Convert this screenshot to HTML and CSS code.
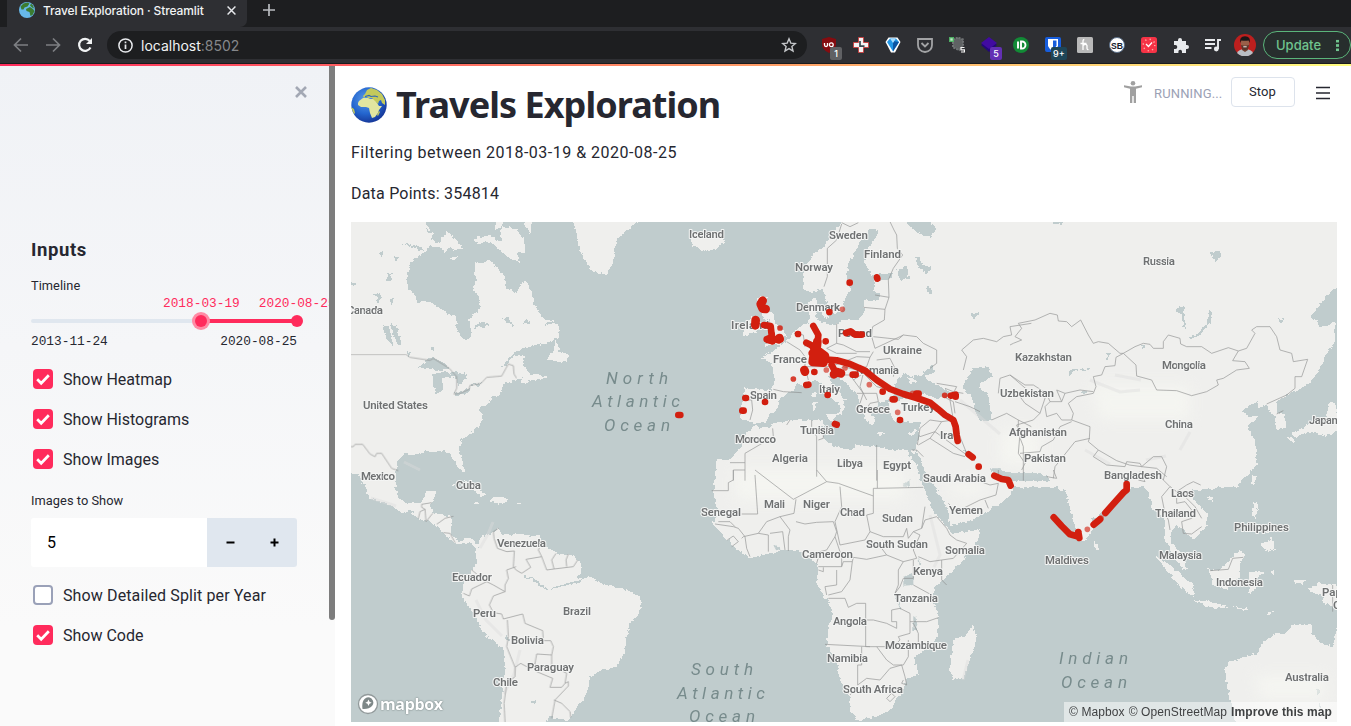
FILE: index.html
```
<!DOCTYPE html>
<html lang="en">
<head>
<meta charset="utf-8">
<title>Travel Exploration · Streamlit</title>
<link rel="stylesheet" href="styles.css">
</head>
<body>
<svg class="defs" width="0" height="0" aria-hidden="true">
  <defs>
    <radialGradient id="sea" cx=".4" cy=".35" r=".65"><stop offset="0" stop-color="#5b9be8"/><stop offset=".6" stop-color="#2466cf"/><stop offset="1" stop-color="#173a9c"/></radialGradient>
    <symbol id="globe" viewBox="0 0 36 36">
      <circle cx="18" cy="18" r="17.7" fill="url(#sea)"/>
      <path d="M7 16l1-2 4-3 5 0 2 1 5 0 2 4 2 3 3 0-3 4-1 3-3 4-3 1-2-5-1-5-3-1-5 0-3-2z" fill="#e2e6a0"/>
      <path d="M12 9l2-2 2-4 4-2 6 2 5 4 3 6 0 5-3-2-1-3-2 1-1 3-3-3-3-3-4 0-2-2-2 2zM0 20l3 2 1 4-1 1zM28 24l1 1-2 4-1-1z" fill="#c3c95c"/>
      <path d="M14 9.500l4-1 2 1 4-.5 3 1" fill="none" stroke="#2f68b4" stroke-width="1.200"/>
    </symbol>
    <symbol id="check" viewBox="0 0 20 20"><path d="M4.200 10.200l4 4 7.600-8" fill="none" stroke="#fff" stroke-width="2.700"/></symbol>
  </defs>
</svg>

<header class="tabstrip">
  <div class="tab">
    <svg class="favicon" viewBox="0 0 16 16"><circle cx="8" cy="8" r="8" fill="#67b8ea"/><path d="M1.500 4.500l3-3 4-1 2 1-2 3-3 1-1 2-2 0zM7 7l4-2 3 2 1.500 2-2 4-2 1-1-4-3-1zM12 1.500l2 2 1 3-2-1-2-2z" fill="#3c7c30"/></svg>
    <span class="tab-title">Travel Exploration · Streamlit</span>
    <svg class="tab-close" viewBox="0 0 8 8"><path d="M.5.500l7 7m0-7l-7 7" stroke="#e8eaed" stroke-width="1.300"/></svg>
  </div>
  <svg class="newtab" viewBox="0 0 12 12"><path d="M6 0v12M0 6h12" stroke="#b9bcc0" stroke-width="1.700"/></svg>
</header>

<nav class="toolbar">
  <svg class="nav-icon" viewBox="0 0 16 16"><path d="M15 8H2M8 1.500L1.500 8 8 14.500" fill="none" stroke="#7d7f83" stroke-width="1.700"/></svg>
  <svg class="nav-icon" viewBox="0 0 16 16"><path d="M1 8h13M8 1.500L14.500 8 8 14.500" fill="none" stroke="#7d7f83" stroke-width="1.700"/></svg>
  <svg class="nav-icon" viewBox="0 0 16 16"><path d="M13.500 10.500a6 6 0 1 1-.8-6.600" fill="none" stroke="#f1f3f4" stroke-width="2.200"/><path d="M15 1v6H9z" fill="#f1f3f4"/></svg>
  <div class="omnibox">
    <svg class="info" viewBox="0 0 15 15"><circle cx="7.500" cy="7.500" r="6.600" fill="none" stroke="#e8eaed" stroke-width="1.500"/><path d="M7.500 6.500V11M7.500 3.600v1.700" stroke="#e8eaed" stroke-width="1.700"/></svg>
    <span class="url">localhost<span class="port">:8502</span></span>
    <svg class="star" viewBox="0 0 16 16"><path d="M8 1.800l1.800 4.300 4.600.4-3.500 3 1.100 4.600L8 11.600l-4 2.500 1.100-4.600-3.500-3 4.600-.4z" fill="none" stroke="#c5c7ca" stroke-width="1.400"/></svg>
  </div>
  <div class="extensions">
    <span class="ext"><svg viewBox="0 0 16 16"><path d="M8 0l7 2v5q0 6-7 9Q1 13 1 7V2z" fill="#850c10"/><path d="M3.500 6v2q0 1.500 1.500 1.500T6.500 8V6" fill="none" stroke="#fff" stroke-width="1.300"/><circle cx="10.300" cy="7.700" r="1.900" fill="none" stroke="#fff" stroke-width="1.300"/></svg><b class="badge gray">1</b></span>
    <span class="ext"><svg viewBox="0 0 16 16"><path d="M5.500.5h5v5h5v5h-5v5h-5v-5h-5v-5h5z" fill="#f3f3f3" stroke="#d23434" stroke-width=".8"/><path d="M7 4v5.200h4.500" fill="none" stroke="#37474f" stroke-width="1.700"/></svg></span>
    <span class="ext"><svg viewBox="0 0 16 16"><path d="M3.500.5h9L15.500 5 10 15.500H6L.5 5z" fill="#fff"/><path d="M5 1.500h6l3 3.500-6 9.500L2 5z" fill="#2196e5"/><path d="M8 4l6 1-6 9.500z" fill="#0c55a3"/><path d="M5 1.500h6L8 6z" fill="#a8ddff"/></svg></span>
    <span class="ext"><svg viewBox="0 0 16 16"><path d="M1 2h14v6q0 6-7 7Q1 14 1 8z" fill="none" stroke="#a2a3a5" stroke-width="1.800"/><path d="M4.500 6L8 9.500 11.500 6" fill="none" stroke="#a2a3a5" stroke-width="1.800"/></svg></span>
    <span class="ext"><svg viewBox="0 0 16 16"><path d="M4 2.500l5-2 5 2v6.500l-4 4-6-2.500z" fill="#5f6264"/><path d="M4 2.500l5-2 5 2v6.500l-4 4-6-2.500z" fill="none" stroke="#707375" stroke-width="2" stroke-dasharray="2 1"/><rect width="5" height="5" fill="#4faf64"/><rect x="1.300" y="1.300" width="2.400" height="2.400" fill="#bde8c5"/><path d="M15.500 10.500H12v2.300h3.500V15H12" fill="none" stroke="#f5f5f5" stroke-width="1.200"/></svg></span>
    <span class="ext"><svg viewBox="0 0 16 16"><path d="M8 2l8 6-8 7-8-7z" fill="#23077a"/><path d="M8 0l8 6-8 6-8-6z" fill="#410ba0"/></svg><b class="badge purple">5</b></span>
    <span class="ext"><svg viewBox="0 0 16 16"><circle cx="8" cy="8" r="8" fill="#128a36"/><path d="M5 4.500v7M8 4.500v7h1a3.500 3.500 0 0 0 0-7z" fill="none" stroke="#fff" stroke-width="1.900"/></svg></span>
    <span class="ext"><svg viewBox="0 0 16 16"><rect width="16" height="15" rx="2" fill="#175ddc"/><path d="M3 2h10v7q-1 3-5 5-4-2-5-5z" fill="#fff"/><path d="M8 3.500h3.500v5Q11 10 8 12z" fill="#175ddc"/></svg><b class="badge teal">9+</b></span>
    <span class="ext"><svg viewBox="0 0 16 16"><rect width="16" height="16" rx="1.500" fill="#b9b9b9"/><path d="M6 13V4q0-1.500 1.300-1.500M6 8.500q3-2.500 4 0V11q0 2 1.500 1.500M3.500 6.500h6" fill="none" stroke="#fff" stroke-width="1.300"/></svg></span>
    <span class="ext"><svg viewBox="0 0 16 16"><circle cx="8" cy="8" r="7.500" fill="#fff" stroke="#5b6f88"/><text x="8" y="11.500" class="sb" textLength="12" lengthAdjust="spacingAndGlyphs">SB</text></svg></span>
    <span class="ext"><svg viewBox="0 0 16 16"><rect width="16" height="16" rx="2.500" fill="#f63346"/><circle cx="8" cy="8" r="5.800" fill="none" stroke="#ffb1a8" stroke-width="1.400" stroke-dasharray="1.200 3.350"/><path d="M5 7l2.500 2.500L11 5.500" fill="none" stroke="#fff" stroke-width="1.300"/></svg></span>
    <span class="ext"><svg viewBox="0 0 16 16"><path d="M1 4h4V3a2 2 0 0 1 4 0v1h4v4h1a2 2 0 0 1 0 4h-1v4H9v-1.500a1.800 1.800 0 0 0-3.600 0V16H1v-4h1.300a1.900 1.900 0 0 0 0-4H1z" fill="#e8eaed"/></svg></span>
    <span class="ext"><svg viewBox="0 0 16 16"><path d="M0 3h10M0 7h10M0 11h6.500M13 12V3h3" fill="none" stroke="#e8eaed" stroke-width="1.900"/><circle cx="11.300" cy="12" r="2.400" fill="#e8eaed"/></svg></span>
    <span class="ext"><svg class="avatar" viewBox="0 0 22 22"><circle cx="11" cy="11" r="11" fill="#bd1f1e"/><path d="M3 19q2-4 8-4t8 4a11 11 0 0 1-16 0z" fill="#b9bdc3"/><path d="M8 12h6v4l-3 2-3-2z" fill="#72402f"/><ellipse cx="11" cy="9.500" rx="4.300" ry="5.500" fill="#995f49"/><path d="M6.300 9Q5 2.500 11 2.300q6 .2 4.700 6.700l-1-2.500q-4 .5-7.400 0z" fill="#1b1718"/><path d="M7 11q4 1.500 8 0-.5 5-4 5t-4-5z" fill="#5a352b"/><path d="M9.300 12.800h3.400" stroke="#eee"/></svg></span>
  </div>
  <div class="update"><span>Update</span><i></i></div>
</nav>
<div class="rainbow"></div>

<div class="app">
  <aside class="sidebar">
    <svg class="side-close" viewBox="0 0 12 12"><path d="M1 1l10 10M11 1L1 11" stroke="#a3a8b4" stroke-width="2.600"/></svg>
    <h2>Inputs</h2>
    <label class="small timeline">Timeline</label>
    <div class="slider">
      <div class="values"><span>2018-03-19</span><span>2020-08-25</span></div>
      <div class="track"><i class="thumb active"></i><i class="thumb"></i></div>
      <div class="range"><span>2013-11-24</span><span>2020-08-25</span></div>
    </div>
    <div class="check"><svg class="box on"><use href="#check"/></svg><span>Show Heatmap</span></div>
    <div class="check"><svg class="box on"><use href="#check"/></svg><span>Show Histograms</span></div>
    <div class="check"><svg class="box on"><use href="#check"/></svg><span>Show Images</span></div>
    <label class="small images">Images to Show</label>
    <div class="number"><span class="num">5</span><span class="steps"><svg viewBox="0 0 9 9"><path d="M.5 4.500h8" stroke="#000" stroke-width="2"/></svg><svg viewBox="0 0 9 9"><path d="M.5 4.500h8M4.500.5v8" stroke="#000" stroke-width="2"/></svg></span></div>
    <div class="check"><i class="box"></i><span class="long">Show Detailed Split per Year</span></div>
    <div class="check"><svg class="box on"><use href="#check"/></svg><span>Show Code</span></div>
    <i class="scrollbar"></i>
  </aside>

  <main>
    <div class="top">
      <h1><svg class="h-globe"><use href="#globe"/></svg><span>Travels Exploration</span></h1>
      <div class="status">
        <svg class="runner" viewBox="0 0 18 22"><circle cx="9" cy="2.300" r="2.300" fill="#a0a0a0"/><path d="M0 4.200l7 1.300h4l7-1.300v2L12 7.700V22h-2.300v-7H8.300v7H6V7.700L0 6.200z" fill="#a0a0a0"/></svg>
        <span class="running">RUNNING...</span>
        <button>Stop</button>
        <svg class="menu" viewBox="0 0 14 14"><path d="M0 1.500h14M0 7h14M0 12.500h14" stroke="#262730" stroke-width="1.700"/></svg>
      </div>
    </div>
    <p class="filter">Filtering between 2018-03-19 &amp; 2020-08-25</p>
    <p class="points">Data Points: 354814</p>
    <div class="map">
      <svg class="world" viewBox="351 222 986 500">
        <defs>
          <filter id="coast" x="0" y="0" width="100%" height="100%"><feTurbulence type="fractalNoise" baseFrequency=".22" numOctaves="2" seed="4"/><feDisplacementMap in="SourceGraphic" scale="5" xChannelSelector="R" yChannelSelector="G"/></filter>
          <filter id="soft" x="-20%" y="-20%" width="140%" height="140%"><feGaussianBlur stdDeviation="7"/></filter>
          <clipPath id="frame"><rect x="351" y="222" width="986" height="500"/></clipPath>
        </defs>
        <g clip-path="url(#frame)">
        <g filter="url(#coast)">
          <rect x="340" y="210" width="1010" height="524" fill="#c0cccd"/>
          <!-- North America, Greenland -->
          <g class="land" transform="translate(350 220) scale(.33333)">
            <path d="M-20-20H215L230 15 252 40 240 58 270 70 283 45 290 30 305 45 325 65 338 85 315 90 300 80 280 97 275 80 255 85 240 78 218 102 190 117 175 150 170 205 195 220 200 248 240 245 270 265 300 287 318 288 320 328 347 362 362 355 362 320 357 297 385 272 388 230 370 208 378 180 372 122 390 130 425 122 450 155 465 170 470 205 500 218 525 180 545 215 550 245 565 270 580 295 610 300 628 320 628 350 600 365 585 372 530 380 500 395 470 420 457 440 475 430 490 410 528 405 520 425 530 450 545 465 560 465 592 470 575 480 540 480 520 493 512 488 518 475 500 478 470 490 455 500 455 520 440 530 425 533 410 560 390 562 398 585 395 605 380 625 355 645 335 660 327 690 340 730 343 755 332 755 310 720 300 700 270 690 230 695 190 705 165 702 145 720 140 745 137 800 60 800 30 770 0 755-20 740z"/>
            <path d="M370 55L420 45 440 65 462 58 450 40 455 20 480 20 502 32 523 60 523 100 500 95 510 130 480 115 450 90 420 65 385 72zM300 118L325 107 310 125zM520-10L550-10 540 42 525 20zM440-10L465-10 455 20 435 30zM665-10L685 60 693 100 725 150 768 165 790 125 800 60 830 30 880-10zM620 362L628 395 655 402 650 425 625 425 592 418 605 400z"/>
            <path class="water" d="M250 465L290 452 310 465 300 475 275 475 275 515 262 525 250 500zM205 443L240 410 280 425 300 445 265 450 235 445zM300 455L345 460 350 475 325 500 318 475zM312 520L357 508 355 515 318 530zM358 498L395 487 390 497zM97 320L115 318 125 345 130 380 110 355zM120 313L140 315 155 375 143 377zM85 98L100 90 105 105 95 115zM108 185L112 163 125 160 122 182zM370 318L400 305 420 318 375 323zM458 295L475 290 490 325zM518 312L535 295 540 312zM580 318L605 302 615 308zM68 215L95 225 85 250 78 235zM118 240L132 232 125 255zM155 70L220 80 218 92zM130 108L145 112 138 122zM3 190L25 195 3 200zM240 383L250 380 247 395zM170 393L185 398 175 408zM225 25L250 32 245 42z"/>
          </g>
          <!-- Central and South America -->
          <g class="land" transform="translate(350 470) scale(.33333)">
            <path d="M15-10L50 60 55 85 110 100 155 128 180 122 205 145 240 155 265 175 285 190 300 205 320 222 345 222 360 215 378 232 382 222 370 208 350 206 330 215 315 210 300 185 305 140 260 130 248 128 240 105 245 98 262 62 230 62 220 85 213 98 170 100 145 80 135 50 130 30 140-10z"/>
            <path d="M378 238L382 222 395 200 430 188 445 175 455 190 480 195 510 192 545 198 570 195 575 220 600 235 620 250 665 255 690 275 697 300 680 325 720 322 765 345 810 352 870 380 875 410 860 440 835 465 828 510 825 550 800 590 760 600 720 620 712 670 690 700 665 735 655 755 610 745 600 735 590 755 590 780 443 780 450 730 465 600 462 540 400 490 370 430 335 380 340 340 360 310 380 280z"/>
            <path d="M340 30L365 40 410 75 388 78 365 58zM415 95L440 80 460 82 482 92 445 101zM372 98H388V101H372zM500 99H515V101H500zM300 45L315 42 312 50z"/>
            <path class="water" d="M463 500L470 498 478 512 468 512zM543 690L558 690 556 702 545 700zM510 320L550 323 575 345 595 357 650 340 690 330 700 322 685 340 640 348 590 360 570 350 545 328z"/>
          </g>
          <!-- Europe and North Africa -->
          <g class="land" transform="translate(690 220) scale(.33333)">
            <path d="M470-20L430 40 400 80 370 100 345 140 338 200 360 222 400 205 410 245 430 285 455 270 465 240 483 210 470 180 475 130 500 85 520 50 545 25 565 35 558 55 530 90 525 130 545 165 610 160 600 178 553 182 550 215 572 222 562 245 522 240 520 290 500 300 460 300 440 312 400 310 385 300 375 285 385 265 375 230 358 248 355 310 320 325 300 355 280 370 250 390 215 415 245 430 250 450 255 480 245 510 165 505 160 540 150 595 175 600 190 612 225 605 265 560 265 545 285 525 310 510 320 490 345 495 375 480 395 490 410 520 440 545 455 570 440 585 455 582 465 560 458 540 478 545 450 522 425 490 415 470 440 460 465 490 500 520 510 550 520 585 545 620 557 602 540 575 560 560 570 545 595 540 598 570 605 590 615 602 650 605 690 605 687 640 680 675 672 693 640 690 600 690 560 680 500 675 480 690 440 680 410 665 395 640 400 600 350 600 300 600 250 610 235 625 190 618 165 650 155 680 110 730 80 800H1060V-20z"/>
            <path d="M200 235L235 228 222 255 250 280 255 310 288 345 275 370 225 378 240 345 240 300 215 290zM155 350L160 330 185 290 210 305 200 335zM2 45L20 35 35 55 80 38 105 65 80 85 50 95 10 80zM405 583L440 583 432 605zM365 520L378 515 378 535 368 530zM365 545L380 545 378 570 368 568zM560 640L590 638 575 645zM655 640L680 630 668 648zM395 270L420 275 410 295 398 290zM370 165L385 170z"/>
            <path class="water" d="M610 530L615 490 640 460 670 470 690 465 730 435 735 455 700 470 730 490 770 510 790 525 740 535 700 520 660 530 625 545 598 545 592 540zM820 490L850 445 895 440 905 470 870 490 872 510 895 520 900 560 905 600 870 605 855 570 845 530 820 508zM620 150L650 138 657 175 632 183zM675 110L690 112 700 135 725 145 710 158 685 145zM645-10L715-10 725 15 740 25 720 50 690 42 660 22zM708 205L720 200 728 220 715 222zM845 280L868 280 850 296zM650 690L662 690 672 705 680 690 685 710 710 745 735 800 705 800 680 750zM818 690L832 695 850 710 880 740 905 755 935 752 965 768 1060 770V800H905L895 775 875 765 860 740 835 712z"/>
            <path d="M650 475L665 470 680 485 665 492z"/>
          </g>
          <!-- Africa and Arabia -->
          <g transform="translate(690 470) scale(.33333)">
            <path class="water" d="M600-5H690L1000-5 1000 300H690zM0-5H95L75 100H0z"/>
            <path class="land-shape" d="M80-30L70 65 85 125 68 160 95 190 130 230 180 265 240 250 290 240 330 245 380 280 385 300 378 340 410 385 430 430 415 480 410 530 440 570 450 630 480 680 480 715 500 750 560 740 600 720 640 660 650 630 685 610 675 560 700 540 745 500 745 440 730 390 735 350 770 320 820 270 865 210 870 178 790 192 770 170 735 130 720 100 700 50 675-30zM690-30L720 30 750 75 775 125 780 165 840 153 900 120 960 80 975 45 925 20 895-10 880-30zM930-30L940 2 980 8 1060 12V-30zM848 465L860 500 840 570 820 625 790 627 780 600 790 510 825 500z"/>
            <path class="water" d="M640 320L670 312 670 345 640 347zM250 225L270 235 272 245 258 240zM615 375L620 375 635 420 628 415zM670 435L677 440 680 480 670 480zM685 260L695 285 688 285zM635 50L658 30 660 50z"/>
          </g>
          <!-- Asia -->
          <g class="land" transform="translate(1010 220) scale(.33333)">
            <path d="M0-20H1010V190L960 215 900 292 920 300 930 320 960 312 975 305 975 370 950 400 930 450 900 490 860 510 830 525 800 545 802 578 825 580 828 625 800 630 795 590 780 575 770 552 742 565 745 540 695 572 715 590 745 588 712 618 735 660 740 705 730 745 680 800H0V755L85 758 120 778 300 800H0z"/>
            <path d="M845 640L900 612 945 610 960 545 975 550 985 590 985 630 945 650 900 635 870 645 860 655zM835 655L853 650 850 672z"/>
            <path class="water" d="M530 355L560 345 590 310 597 272 605 275 600 310 570 345 545 358zM598 92L630 95 632 105 620 128 605 110zM495 268L520 258 527 325 522 325 515 290zM172 465L180 448 240 445 240 450 190 452 178 470zM205 515L232 513 220 520zM805 298L825 298 812 312zM123 5H160V14L130 12zM288 400L302 400 292 420zM395 375L405 375 402 385zM0 750H80L125 782H0z"/>
          </g>
          <!-- South-East Asia and Australia -->
          <g class="land" transform="translate(1010 470) scale(.33333)">
            <path d="M0-20V10L100 8 120 30 150 62 165 60 185 130 200 180 218 220 245 185 245 150 300 110 350 60 385 30 400 50 415 70 430 120 465 140 465 200 480 240 510 290 532 302 520 260 485 220 480 190 500 165 535 195 550 212 592 170 590 130 550 90 545 58 570 62 640 50 690 35 745-20zM250 208L268 235 257 245zM432 252L480 285 550 345 552 382 510 350 460 290zM550 390L600 395 665 412 600 414zM595 295L625 300 660 270 690 238 707 255 690 280 690 325 650 358 610 345zM718 305L770 305 745 320 735 330 750 355 735 355 720 380 715 345zM730 98L745 100 738 145 724 130zM755 225L785 205 795 235 775 245zM730 15L742 15 732 45 725 35zM590 85L610 78 605 95zM850 330L885 330 880 342 855 338zM895 355L930 338 1010 350V440L970 410 945 400 935 375 905 370zM765 435L790 422 780 436zM750 170L765 170 775 190 755 185zM670 408L720 418 700 422zM780 305L795 300 795 315zM645 600L660 575 740 550 755 520 800 488 830 490 850 460 905 465 905 490 945 525 970 528 980 468 1010 470V780H680L670 730 660 680 650 640z"/>
            <path class="water" d="M918 655L930 660 928 675 918 675zM925 690L932 710 930 725z"/>
          </g>
        </g>
        <!-- desert and plateau highlights -->
        <g filter="url(#soft)" fill="#f7f8f3" opacity=".7"><path d="M735 468H905V500H735zM1090 385H1190V420H1100zM1255 675H1325V700H1260zM1000 430H1040V465H1000zM950 482H985V495H950z"/></g>
        <!-- relief -->
        <g class="relief"><path d="M371 498l25 8M480 548l8-14 5-12M476 600l10 20 16 16M520 650l-6 24-10 20M930 515l10 40-6 12M1090 380l30 12 20-2M1180 450l10-18M1085 450l25 14M1146 460l20-4M960 400l40 34M420 470l-16-8M1115 375l26 5M968 660l-5 20"/></g>

        <g class="borders">
          <path transform="translate(350 220) scale(.33333)" d="M0 403H168L180 412 240 421 250 415 298 445 320 470 320 505 312 522 330 520 357 508 360 496 393 490 410 472 455 468 475 432 490 437 492 462 500 475M0 680H10L15 673H38L60 702 75 710 80 700H95L125 745 145 752"/>
          <path transform="translate(350 470) scale(.33333)" d="M205 145L210 125 225 118 215 112 215 103 245 98M225 118L228 155M228 155L248 130M260 163L285 145 310 139M280 188L300 190 315 218M445 175L430 185 432 205 442 235 470 245 493 243 490 290 498 300 515 310 542 292 528 268 575 260 565 240 575 220M575 260L590 300 612 297 670 290 683 270M612 297L605 270 618 250M650 290L648 270 655 252M498 290L470 300 475 325 465 345 465 365 430 345 410 335 365 357 358 378 340 370M365 300L380 312M465 365L430 378 418 405 430 428 455 432 460 447 518 432 525 460 578 482 580 512 602 512 610 530 605 555 560 552 555 580 530 590 512 580 495 592 482 560 470 530 475 500 472 450M605 555L605 585 640 605 650 610 645 640 635 652 600 652 608 625 560 605 555 580M645 640L655 635 655 648 615 690 605 745M612 690L635 700 660 725 662 742M495 592L495 620 470 640 462 700 465 756"/>
          <path transform="translate(690 220) scale(.33333)" d="M455 12L440 60 412 85 412 170 402 200M455 8L480 20 505 8M600 5L612 30 620 45 622 85 638 105 610 145 595 180M555 225L597 232 595 180M520 262L585 268 597 232M585 268L583 300 548 320 545 350 555 385 630 350 630 350M550 350L625 358 640 345 680 350 700 370 740 390 740 430 720 445M630 350L640 345M440 310L440 370 460 375 500 395 540 395M440 370L410 385 440 400 500 400M290 365L330 390 345 410M312 340L340 345 345 380M345 410L345 440 355 480M345 440L420 440 450 430 500 410 540 412 550 395M540 412L530 440 500 450 460 440M460 440L440 455M450 465L480 465 520 520 510 550M490 480L520 460 560 500 600 510M500 520L560 520 565 545 540 550 525 575M560 420L600 415 615 445 610 470M520 460L510 500 530 540M250 508L280 515 335 518M185 540L188 570 180 600M165 540L185 540M300 600L290 615M365 600L365 620 380 650 380 770M400 625L400 655 385 660M248 625L250 650 225 665 165 700 165 782M120 728H165M130 782V750H165M560 675V782M665 690L680 690 700 710M682 675L690 625 720 600 755 605 790 600M690 650L735 635 755 605M735 635L720 655 685 675M735 635L830 705 830 705M790 600L810 650 830 700M720 655L790 700 825 710M790 600L780 540 800 500 740 490M765 505L790 515 820 520M795 545L840 560 870 575M760 530L790 545 795 580M820 450L830 410 815 390 850 360 880 355 920 365 940 350 965 345 960 320 1024 310M905 600L950 580 985 600 1024 620M925 520L930 475 960 465 1024 520M985 600L985 640 1000 680 1000 782"/>
          <path transform="translate(690 470) scale(.33333)" d="M195 15L203 132H155M65 62H115V38L130 30V0M195 0L310 88 410 35 380 0M410 35L445 40 550 78V55H562V0M562 55L700 52M550 78V130L530 135 540 185 525 210 450 225 435 155 455 110 450 50M318 88L312 130 270 140 230 155 205 190 160 200 155 205M135 170L120 155 85 155M75 162L130 170 145 175 165 200 170 235 180 260M112 210L130 198 145 215 125 230M205 190L235 195 235 245M240 190L278 185 285 240M295 243V200L300 180 270 140M318 155L345 162 380 157 430 155 440 185 435 200 410 240 390 245 380 280M435 200L455 260 455 290H385M455 290L460 275 487 275 490 262 455 260M487 275L480 330 455 365 415 375M440 300L440 345 405 350 410 375M385 300L400 305V292M490 262L530 268 590 255 640 275 680 265 670 240 690 195 670 185 655 205 650 175 640 200 580 200 540 185M590 255L575 235 530 215M670 185L695 175 705 110M740 140L705 150 695 175M740 140L770 175 780 195 800 210 830 220 790 265 755 270 720 275 685 260M755 270V330L770 345M670 345L725 375M640 275L625 300 625 345 615 370 630 350 640 325H670V270M415 385H465L475 412 500 400H527L527 530 540 530M527 450H550L590 460 620 475V455L605 455 605 420 630 415 660 430 660 490 625 500 630 510 610 530 560 530M660 455L710 455 745 443M405 523L540 530 560 530 590 570 610 585 640 585 655 560 655 510M515 530V585H503V645L530 625 570 630 600 595 635 585 645 620 650 645 635 640 640 630M590 685L605 670 615 680 600 695zM670 460L685 490 685 520M480 675L503 650M775 100L800 125 870 90 918 75 925 40 900 45 845 25M885 90L895 115M925 20V0"/>
          <path transform="translate(1010 220) scale(.33333)" d="M0 375L10 370 35 360 15 350 35 325 25 310 75 300 120 280 142 285 145 303 170 305 185 320 212 300 235 345 250 370 265 365 295 370 330 400 340 400 375 380 400 370 420 373 430 385 460 385 460 365 475 345 510 355 512 372 530 380 575 380 605 400 655 383 685 393 710 385 735 340 725 330 740 320 780 320 800 350 810 390 845 400 850 425 893 418 875 470 855 470 855 505 830 525 770 552M685 393L668 422 705 425 718 445 680 450 640 475 620 480 625 495 590 515 545 527 500 512 440 510 425 480 380 468 378 435 340 400 318 412 315 437 285 440 275 465 250 470 258 500 250 520 200 530 175 550 190 580 185 600 240 620 238 655 235 665 265 690 320 722 358 735 395 740 430 710 455 710 470 740 460 780M0 465L45 495 70 495 110 520 120 545 155 545 165 520 210 510 250 515M110 520L90 580 45 550 30 530 0 520M120 545L105 560 110 590 140 580 155 600 185 600M165 520L140 510 155 545M90 580L70 600 20 615 30 640 25 700 45 730 35 750M30 700L90 695 95 680 130 660 150 620 185 605M130 775L135 740 195 665 240 655M265 690L250 710 290 735 345 740 350 725 390 730 395 740M395 740L440 745 470 770M800 582L820 572"/>
          <path transform="translate(1010 470) scale(.33333)" d="M390 5L405 35 385 30M450 20L480 50 455 80 465 130 475 150 480 180M480 50L500 65 530 45 550 35 572 45M500 65L500 100 525 95 545 120 545 145 515 155 520 190 545 192 575 170M530 85L555 110 575 145M600 302L655 298 668 265 700 262M968 345V425M130 0L140 25 110 20"/>
        </g>

        <g class="labels">
          <text x="347" y="314" textLength="36">Canada</text><text x="363" y="409" textLength="65">United States</text><text x="361" y="480" textLength="34">Mexico</text><text x="456" y="489" textLength="25">Cuba</text><text x="497" y="547" textLength="49">Venezuela</text><text x="452" y="581" textLength="40">Ecuador</text><text x="473" y="617" textLength="23">Peru</text><text x="563" y="615" textLength="28">Brazil</text><text x="511" y="644" textLength="33">Bolivia</text><text x="527" y="671" textLength="47">Paraguay</text><text x="493" y="686" textLength="25">Chile</text>
          <text x="689" y="238" textLength="35">Iceland</text><text x="829" y="239" textLength="39">Sweden</text><text x="864" y="258" textLength="37">Finland</text><text x="795" y="271" textLength="38">Norway</text><text x="796" y="311" textLength="44">Denmark</text><text x="731" y="329" textLength="38">Ireland</text><text x="838" y="337" textLength="34">Poland</text><text x="883" y="354" textLength="39">Ukraine</text><text x="773" y="363" textLength="34">France</text><text x="856" y="374" textLength="43">Romania</text><text x="819" y="393" textLength="21">Italy</text><text x="750" y="399" textLength="27">Spain</text><text x="856" y="413" textLength="34">Greece</text><text x="901" y="411" textLength="34">Turkey</text><text x="800" y="434" textLength="34">Tunisia</text><text x="940" y="439" textLength="20">Iraq</text><text x="735" y="443" textLength="41">Morocco</text><text x="772" y="462" textLength="36">Algeria</text><text x="837" y="467" textLength="26">Libya</text><text x="883" y="469" textLength="28">Egypt</text><text x="923" y="482" textLength="63">Saudi Arabia</text>
          <text x="701" y="516" textLength="40">Senegal</text><text x="764" y="508" textLength="21">Mali</text><text x="803" y="508" textLength="27">Niger</text><text x="840" y="516" textLength="25">Chad</text><text x="882" y="522" textLength="31">Sudan</text><text x="949" y="514" textLength="34">Yemen</text><text x="866" y="548" textLength="62">South Sudan</text><text x="945" y="554" textLength="40">Somalia</text><text x="802" y="558" textLength="51">Cameroon</text><text x="913" y="575" textLength="30">Kenya</text><text x="894" y="602" textLength="44">Tanzania</text><text x="833" y="625" textLength="34">Angola</text><text x="885" y="649" textLength="62">Mozambique</text><text x="827" y="662" textLength="41">Namibia</text><text x="843" y="693" textLength="60">South Africa</text>
          <text x="1143" y="265" textLength="32">Russia</text><text x="1015" y="361" textLength="57">Kazakhstan</text><text x="1162" y="369" textLength="44">Mongolia</text><text x="1000" y="397" textLength="54">Uzbekistan</text><text x="1165" y="428" textLength="28">China</text><text x="1309" y="424" textLength="29">Japan</text><text x="1009" y="436" textLength="58">Afghanistan</text><text x="1024" y="462" textLength="42">Pakistan</text><text x="1104" y="479" textLength="58">Bangladesh</text><text x="1171" y="497" textLength="23">Laos</text><text x="1155" y="517" textLength="41">Thailand</text><text x="1234" y="531" textLength="55">Philippines</text><text x="1159" y="559" textLength="43">Malaysia</text><text x="1045" y="564" textLength="44">Maldives</text><text x="1216" y="586" textLength="47">Indonesia</text><text x="1322" y="596" textLength="58">Papua New</text><text x="1333" y="609" textLength="34">Guinea</text><text x="1285" y="681" textLength="44">Australia</text>
        </g>
        <g class="oceans">
          <text x="606" y="384" textLength="62">North</text><text x="592" y="407" textLength="88">Atlantic</text><text x="604" y="431" textLength="66">Ocean</text>
          <text x="691" y="675" textLength="62">South</text><text x="677" y="699" textLength="88">Atlantic</text><text x="689" y="722" textLength="66">Ocean</text>
          <text x="1059" y="664" textLength="69">Indian</text><text x="1061" y="688" textLength="66">Ocean</text>
        </g>

        <!-- recorded locations: routes and isolated points -->
        <g class="heat" transform="translate(690 220) scale(.33333)">
          <path d="M400 418L440 421 480 432 525 452 560 480 600 507 640 522 680 534 720 548 745 568 765 585 790 600 797 620 800 645 803 663"/>
          <path class="wide" d="M218 242L212 252 218 266 227 267M197 300L196 316M246 360L236 358M268 354L266 358"/><path d="M222 315L242 318 246 355M230 358L272 358M245 340L247 364M370 318L385 345 382 380M349 368L382 385M468 339L482 334 495 344 515 344M425 435L438 460"/>
          <path class="wide" d="M372 383L405 408 370 412 368 426 400 428 390 400 405 420M382 365L380 385M368 400L400 420M432 463L440 456 453 460M343 450L345 455"/>
          <path d="M349 495L355 494M488 464H497M782 527L797 524 797 530M836 703L848 712M608 538H614M435 612L440 614M561 172L562 176M679 521L686 521M166 534H168M157 572H161"/>
          <g class="dots"><path d="M324 342h.1M407 364h.1M373 456h.1M225 546h.1M413 525h.1M479 188h.1M418 276h.1M578 515h.1M630 600h.1M866 740h.1"/></g>
          <g class="faint strong"><path d="M270 324h.1M310 477h.1M764 526h.1"/></g>
          <g class="faint"><path d="M457 268h.1M409 450h.1M538 494h.1M623 577h.1M668 520h.1M465 444h.1"/></g>
          <path d="M913 767L935 777 955 780 962 797"/>
        </g>
        <g class="heat" transform="translate(350 220) scale(.33333)"><path d="M985 585H991"/></g>
        <g class="heat" transform="translate(1010 470) scale(.33333)">
          <path d="M131 142L155 168 180 193 207 200 205 186 208 204M251 164L270 148M286 129L340 68 350 60 350 42"/><g class="faint"><path d="M232 178h.1M273 144h.1"/></g>
        </g>
        </g>
      </svg>
      <div class="mapbox"><svg viewBox="0 0 22 22"><circle cx="11" cy="11" r="9.500" fill="#fff" stroke="#929a9b" stroke-width="1.300"/><path d="M5.500 16q-1-7 2-10t7-.5q3.500 4 .5 7.500t-9.500 3z" fill="#7e8888"/><path d="M11.500 6.500l1 2.200 2.200 1-2.200 1-1 2.200-1-2.200-2.200-1 2.200-1z" fill="#fff"/></svg><span>mapbox</span></div>
      <div class="credits"><span>© Mapbox</span><span>© OpenStreetMap</span><b>Improve this map</b></div>
    </div>
  </main>
</div>
</body>
</html>
```
FILE: styles.css
```
* { box-sizing: border-box; }
body { margin: 0; width: 1351px; height: 726px; overflow: hidden; background: #fff; color: #262730; font-family: Roboto, "Noto Sans", sans-serif; display: flex; flex-direction: column; }
svg { display: block; flex: none; }
.defs { position: absolute; }
.tabstrip { height: 27px; background: #1d1e20; display: flex; padding-left: 7px; }
.tab { width: 240px; height: 27px; background: #2e2f33; border-radius: 0 0 7px 0; display: flex; align-items: center; padding: 0 11px 7px 12px; color: #f1f3f4; }
.favicon { width: 16px; height: 16px; }
.tab-title { margin-left: 8px; font: 500 12px Inter, sans-serif; letter-spacing: -.11px; white-space: nowrap; width: 184px; }
.tab-close { width: 9px; height: 9px; }
.newtab { width: 12px; height: 12px; margin: 4px 0 0 16px; }
.toolbar { height: 37px; background: #2e2f33; display: flex; align-items: center; padding-left: 13px; border-bottom: 1px solid #1b1c1e; }
.nav-icon { width: 16px; height: 16px; margin-right: 16px; }
.omnibox { width: 700px; height: 28px; margin-left: -2px; border-radius: 14px; background: #1d1e20; display: flex; align-items: center; padding: 0 10px 0 11px; }
.info { width: 15px; height: 15px; }
.url { flex: 1; margin-left: 8px; color: #f1f3f4; font: 400 14px Inter, sans-serif; }
.port { color: #85878a; }
.star { width: 16px; height: 16px; }
.extensions { display: flex; margin-left: 6px; }
.ext { width: 32px; height: 24px; display: grid; place-items: center; position: relative; }
.ext svg { width: 16px; height: 16px; }
.ext .avatar { width: 22px; height: 22px; }
.sb { font: 700 9.5px "Liberation Sans", sans-serif; text-anchor: middle; fill: #16202c; }
.badge { position: absolute; left: 17px; top: 14px; height: 13px; min-width: 12px; padding: 0 2px; border-radius: 2px; color: #fff; font: 500 9px/13px Inter, sans-serif; text-align: center; }
.gray { background: #606164; }
.purple { background: #6330b4; }
.teal { background: #1e4558; left: 14px; }
.update { width: 88px; height: 28px; margin-left: 2px; border: 1.5px solid #5bb57b; border-radius: 14px; background: #272e2d; color: #70c48e; font: 500 13px Inter, sans-serif; display: flex; align-items: center; justify-content: space-between; padding: 0 11px 0 12px; }
.update i { width: 3px; height: 13px; background: radial-gradient(circle, #70c48e 1.5px, transparent 1.7px) 0 0 / 3px 4.33px; }
.rainbow { height: 2px; background: linear-gradient(90deg, #ff2b5c, #ffa067 58%, #fffd80); }
.app { display: flex; flex: 1; min-height: 0; }
.sidebar { width: 335px; height: 660px; position: relative; overflow: hidden; background: linear-gradient(#f0f2f6, #fafafa 85%); padding: 20px 38px 0 31px; display: flex; flex-direction: column; }
.side-close { width: 12px; height: 12px; margin-left: 264px; }
.sidebar h2 { margin: 142px 0 0; font-size: 18.5px; line-height: 20px; font-weight: 700; letter-spacing: .6px; }
.small { font-size: 12.8px; line-height: 18px; letter-spacing: .05px; }
.timeline { margin-top: 17px; }
.slider { font: 12.8px/16px "Liberation Mono", monospace; height: 64px; padding-top: 1px; }
.values { color: #ff2b5c; margin-left: 132px; display: flex; gap: 19px; white-space: nowrap; width: 166px; overflow: hidden; }
.track { width: 266px; height: 4px; margin-top: 7px; border-radius: 2px; background: linear-gradient(90deg, #e0e7ef 170px, #ff2b5c 170px); position: relative; }
.thumb { position: absolute; width: 12px; height: 12px; top: -4px; left: 260px; border-radius: 50%; background: #ff2b5c; }
.thumb.active { left: 164px; box-shadow: 0 0 0 3px #ff8ba5; }
.range { display: flex; justify-content: space-between; margin-top: 11px; }
.check { height: 40px; padding-left: 2px; display: flex; align-items: center; font-size: 16px; gap: 10px; white-space: nowrap; }
.long { letter-spacing: .12px; }
.box { width: 20px; height: 20px; border-radius: 4px; border: 2px solid #9aa1b8; background: #fff; }
.box.on { border: 0; background: #ff2b5c; }
.images { margin-top: 13px; }
.number { width: 266px; height: 49px; margin: 8px 0 8px; display: flex; border-radius: 3px; overflow: hidden; color: #000; }
.num { width: 176px; background: #fff; padding: 15px 16px; font-size: 16px; line-height: 19px; }
.steps { width: 90px; background: #e0e7ef; display: flex; align-items: center; justify-content: space-around; padding-left: 1px; }
.steps svg { width: 9px; height: 9px; }
.scrollbar { position: absolute; right: 0; top: -6px; width: 6px; height: 560px; background: #7d7d7d; border-radius: 3px; }
main { flex: 1; padding: 0 14px 0 16px; }
.top { height: 76px; display: flex; justify-content: space-between; }
h1 { margin: 19px 0 0; height: 40px; display: flex; align-items: center; gap: 9px; font: 700 36px/40px "Noto Sans", sans-serif; letter-spacing: -.95px; white-space: nowrap; }
h1 span { width: 335px; }
.h-globe { width: 36px; height: 36px; }
.status { display: flex; align-items: center; height: 30px; margin-top: 11px; padding-right: 7px; }
.runner { width: 18px; height: 22px; }
.running { width: 78px; padding: 3px 0 0 12px; color: #9ba1b5; font-size: 13px; letter-spacing: .15px; }
button { width: 64px; height: 30px; margin: 0 21px 0 11px; padding: 0 1px 1px 0; border: 1px solid #dde3ec; border-radius: 4px; background: #fff; color: #262730; font: 13px Roboto, sans-serif; letter-spacing: .1px; }
.menu { width: 14px; height: 14px; margin-top: 2px; }
p { margin: 0; height: 41px; line-height: 22px; font-size: 16px; }
.filter { letter-spacing: .5px; }
.points { height: 39px; letter-spacing: .21px; }
.map { width: 986px; height: 500px; position: relative; overflow: hidden; background: #c0cccd; }
.world { width: 986px; height: 500px; }
.land path, .land-shape { fill: #efefed; shape-rendering: crispEdges; }
.water, .land .water { fill: #c0cccd; }
.relief { fill: none; stroke: #dcdddb; stroke-width: 3; opacity: .4; }
.borders { fill: none; stroke: #858787; stroke-width: 2.2; stroke-linejoin: round; opacity: .8; }
.labels text { font: 600 11.5px Roboto, sans-serif; fill: #6f7172; stroke: #f4f5f4; stroke-width: 2px; stroke-linejoin: round; paint-order: stroke; }
.oceans text { font: italic 400 17px Roboto, sans-serif; fill: #778b8c; }
.heat { fill: none; stroke: #d21f0f; stroke-width: 20; stroke-linecap: round; stroke-linejoin: round; }
.heat .wide { stroke-width: 26; }
.faint { opacity: .62; stroke-width: 17; }
.strong { opacity: .85; }
.mapbox { position: absolute; left: 6px; bottom: 7px; display: flex; align-items: center; gap: 1px; color: #fff; font: 700 16px/22px "Open Sans", sans-serif; letter-spacing: -.35px; text-shadow: 0 0 2px #788383, 0 0 1px #788383; }
.mapbox svg { width: 22px; height: 22px; }
.credits { position: absolute; right: 0; bottom: 0; width: 273px; height: 20px; display: flex; gap: 4px; padding-left: 5px; background: rgba(255,255,255,.5); color: #404243; font: 12px/20px "Liberation Sans", sans-serif; letter-spacing: .1px; white-space: nowrap; }
```
